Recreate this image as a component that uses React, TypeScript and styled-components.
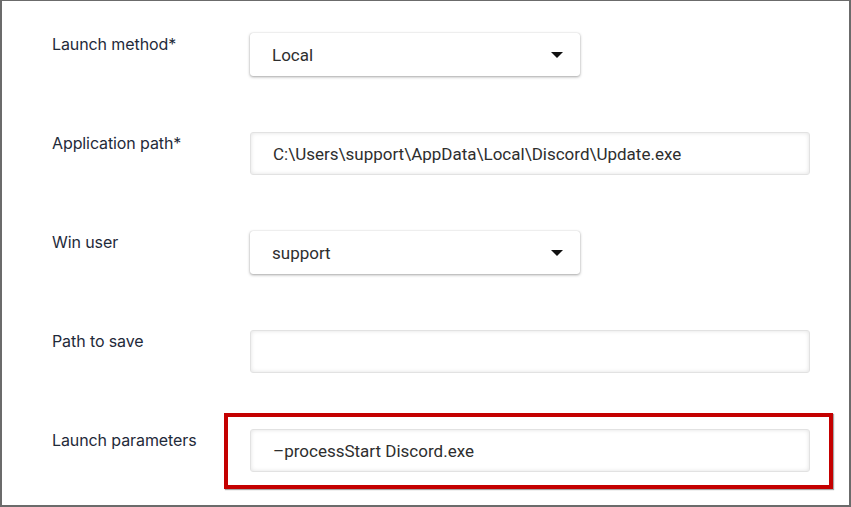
import React from "react";
import styled, { createGlobalStyle } from "styled-components";

const GlobalStyle = createGlobalStyle`
  html, body {
    margin: 0;
    padding: 0;
    background: #ffffff;
  }
  * {
    box-sizing: border-box;
  }
`;

const Frame = styled.div`
  width: 851px;
  height: 507px;
  overflow: hidden;
  background: #ffffff;
  border-style: solid;
  border-color: #6b6b6b;
  border-width: 1px 2px 2px 2px;
  padding: 32px 0 0 50px;
`;

const Form = styled.div`
  display: flex;
  flex-direction: column;
  gap: 56px;
`;

const Row = styled.div`
  display: grid;
  grid-template-columns: 198px 1fr;
  align-items: start;
`;

const Label = styled.div`
  font-family: Inter, "Noto Sans", sans-serif;
  font-size: 16px;
  color: #1f2a3a;
  padding-top: 1px;
  line-height: 20px;
  letter-spacing: -0.1px;
`;

const Field = styled.div<{ $width: number }>`
  position: relative;
  width: ${(p) => p.$width}px;
  height: 43px;
`;

const SelectBox = styled.div`
  height: 100%;
  display: flex;
  align-items: center;
  justify-content: space-between;
  padding: 0 17px 0 22px;
  background: #ffffff;
  border-radius: 3px;
  box-shadow: 0 1px 3px rgba(0, 0, 0, 0.35), 0 0 1px rgba(0, 0, 0, 0.2);
`;

const InputBox = styled.div`
  height: 100%;
  display: flex;
  align-items: center;
  padding: 0 22px;
  background: #ffffff;
  border: 1px solid #e2e2e2;
  border-radius: 3px;
  box-shadow: inset 0 0 4px rgba(0, 0, 0, 0.12);
`;

const Value = styled.span`
  font-family: Roboto, "Liberation Sans", sans-serif;
  font-size: 17px;
  color: #2e2e2e;
  white-space: nowrap;
  padding-top: 1px;
`;

const Caret = styled.span`
  width: 0;
  height: 0;
  border-left: 6.5px solid transparent;
  border-right: 6.5px solid transparent;
  border-top: 6px solid #111111;
`;

const Highlight = styled.div`
  position: absolute;
  top: -16px;
  left: -26px;
  right: -23px;
  bottom: -17px;
  border: 4px solid #c40000;
  box-shadow: 1px 1px 1px rgba(0, 0, 0, 0.35);
  pointer-events: none;
`;

type FieldDef = {
  label: string;
  kind: "select" | "input";
  value: string;
  highlight?: boolean;
};

const fields: FieldDef[] = [
  { label: "Launch method*", kind: "select", value: "Local" },
  {
    label: "Application path*",
    kind: "input",
    value: "C:\\Users\\support\\AppData\\Local\\Discord\\Update.exe",
  },
  { label: "Win user", kind: "select", value: "support" },
  { label: "Path to save", kind: "input", value: "" },
  {
    label: "Launch parameters",
    kind: "input",
    value: "–processStart Discord.exe",
    highlight: true,
  },
];

export default function App() {
  return (
    <>
      <GlobalStyle />
      <Frame>
        <Form>
          {fields.map((f) => (
            <Row key={f.label}>
              <Label>{f.label}</Label>
              {f.kind === "select" ? (
                <Field $width={330}>
                  <SelectBox>
                    <Value>{f.value}</Value>
                    <Caret />
                  </SelectBox>
                </Field>
              ) : (
                <Field $width={560}>
                  <InputBox>
                    <Value>{f.value}</Value>
                  </InputBox>
                  {f.highlight && <Highlight />}
                </Field>
              )}
            </Row>
          ))}
        </Form>
      </Frame>
    </>
  );
}
